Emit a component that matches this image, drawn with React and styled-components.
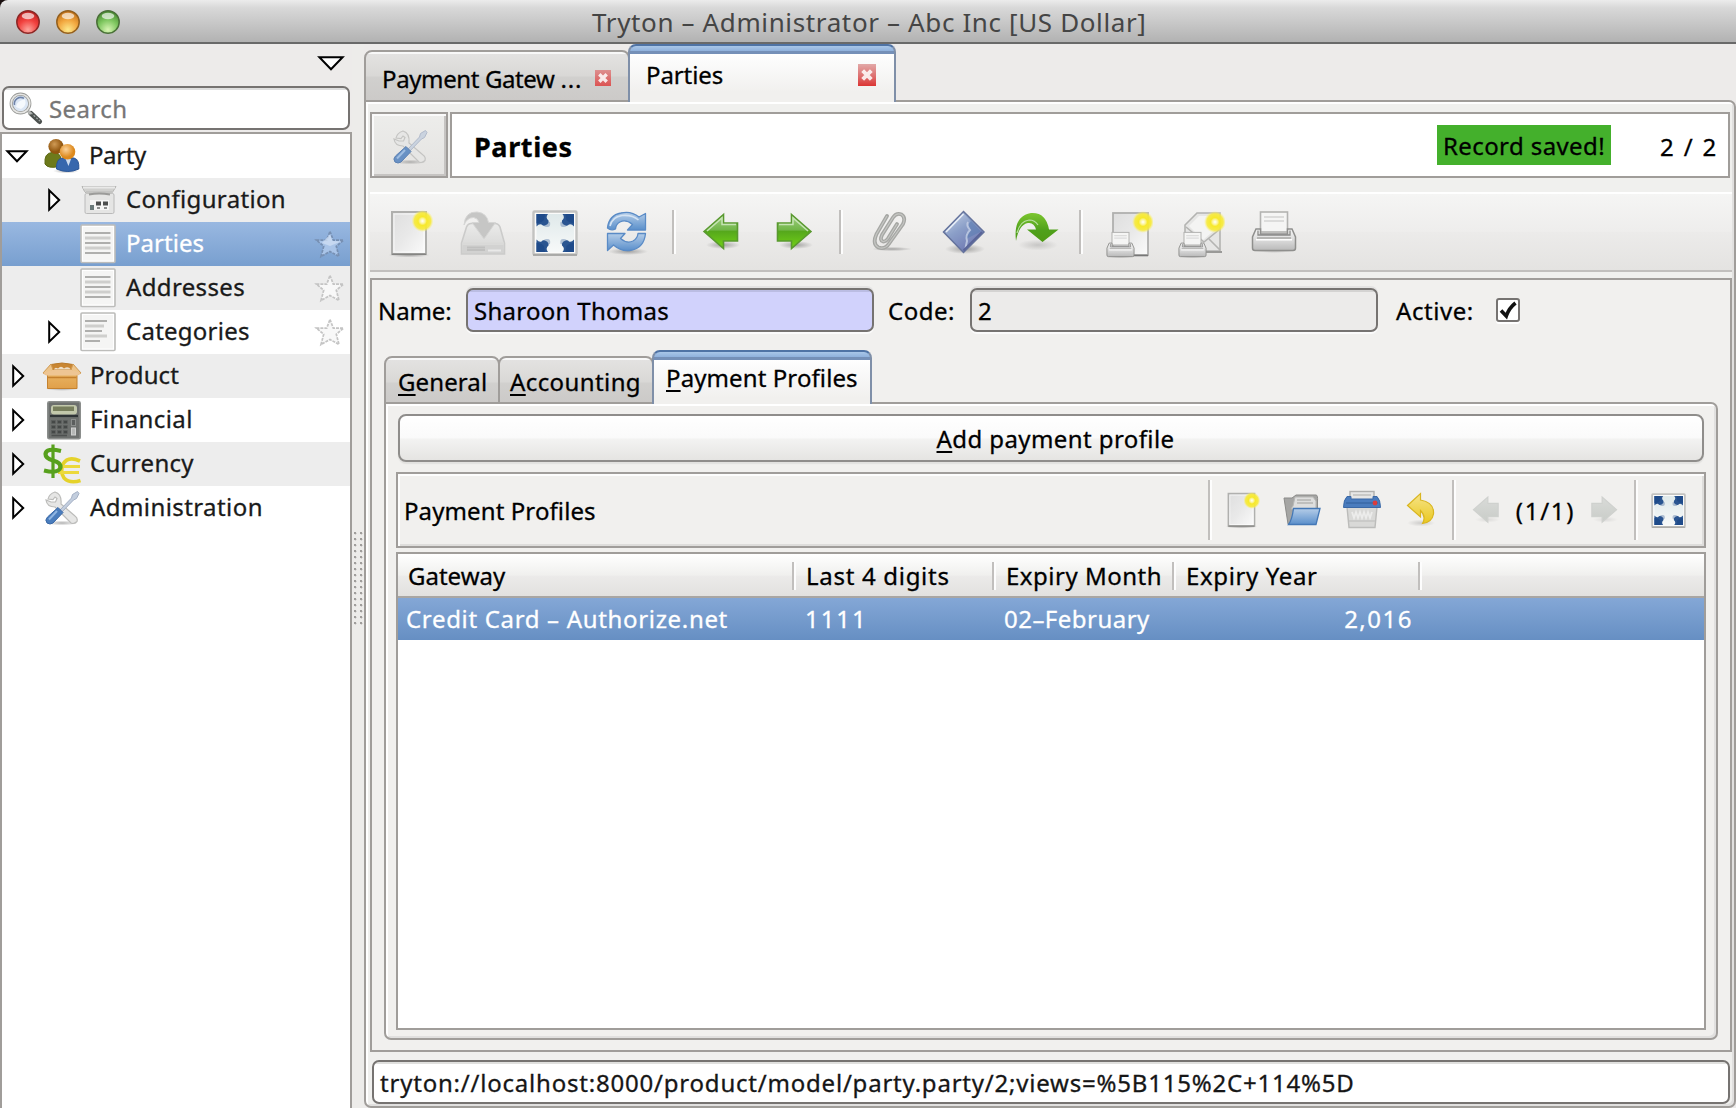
import React from "react";
import styled, { createGlobalStyle, css } from "styled-components";

const line = "#a09d9a";
const lineDark = "#767371";
const face = "#f1f0ee";

const Global = createGlobalStyle`
  *, *::before, *::after { box-sizing: border-box; }
  html, body { margin: 0; height: 100%; overflow: hidden; background: #edebe9; }
  body { font-family: "Noto Sans", "Open Sans", sans-serif; font-size: 24px; line-height: 32px; color: #000; }
  svg { display: block; flex: none; }
`;

const T = styled.span`
  letter-spacing: ${(p) => p.$ls || 0}px;
  white-space: nowrap;
  -webkit-text-stroke: 0.3px currentColor;
`;

const Window = styled.div`
  width: 1736px;
  height: 1108px;
  display: flex;
  flex-direction: column;
  overflow: hidden;
  background: #1a1010;
`;

const TitleBar = styled.header`
  height: 44px;
  flex: none;
  display: grid;
  grid-template-columns: 592px 1fr;
  align-items: center;
  border-radius: 8px 0 0 0;
  background: linear-gradient(#ececec 0, #d8d8d8 8px, #b2b2b2 42px);
  border-bottom: 2px solid #696969;
`;

const Lights = styled.div`
  display: flex;
  gap: 16px;
  padding-left: 16px;
  padding-top: 1px;
`;

const TitleText = styled(T)`
  font-size: 26px;
  color: #454545;
  padding-top: 1px;
  -webkit-text-stroke: 0;
`;

const Body = styled.div`
  flex: 1;
  min-height: 0;
  display: flex;
  background: #edebea;
`;

const Sidebar = styled.aside`
  width: 352px;
  flex: none;
  display: flex;
  flex-direction: column;
`;

const MenuHead = styled.div`
  height: 42px;
  display: flex;
  justify-content: flex-end;
  padding: 12px 7px 0 0;
`;

const SearchBox = styled.div`
  height: 44px;
  margin: 0 2px;
  display: flex;
  align-items: center;
  gap: 6px;
  padding: 1px 6px 0 5px;
  border: 2px solid ${lineDark};
  border-radius: 7px;
  background: linear-gradient(#dedede 2px, #fff 2px);
  color: #767676;
`;

const Tree = styled.div`
  flex: 1;
  margin-top: 2px;
  border: solid ${line};
  border-width: 2px 2px 0;
  background: #fff;
`;

const TreeRow = styled.div`
  height: 44px;
  display: flex;
  align-items: center;
  padding-right: 4px;
  color: ${(p) => (p.$selected ? "#fff" : "#1a1a1a")};
  background: ${(p) => (p.$selected ? "linear-gradient(#99b8e1, #789fcf)" : p.$odd ? "#ededed" : "#fff")};
`;

const Expander = styled.div`
  width: ${(p) => (p.$open ? 29 : 28)}px;
  margin-left: ${(p) => (p.$depth ? 41 : p.$open ? 3 : 5)}px;
  padding-left: ${(p) => (p.$open ? 0 : 5)}px;
  flex: none;
`;

const TreeIcon = styled.div`
  width: 55px;
  padding-left: ${(p) => p.$pad}px;
  flex: none;
`;

const TreeLabel = styled(T)`
  flex: 1;
  padding-bottom: 2px;
`;

const Splitter = styled.div`
  width: 12px;
  flex: none;
  display: flex;
  flex-direction: column;
  padding: 488px 0 0 2px;
  background: #edecea;
`;

const Grip = styled.div`
  width: 10px;
  height: 94px;
  background-image: radial-gradient(circle at 1.2px 1.2px, #9f9d9b 1px, transparent 1.5px);
  background-size: 6px 6px;
`;

const Workspace = styled.main`
  flex: 1;
  min-width: 0;
  display: flex;
  flex-direction: column;
`;

const TabStrip = styled.div`
  display: flex;
  align-items: flex-end;
  height: ${(p) => p.$h}px;
  flex: none;
  margin-bottom: -2px;
`;

const Tab = styled.div`
  width: ${(p) => p.$w}px;
  height: ${(p) => p.$h}px;
  margin-right: ${(p) => p.$mr || 0}px;
  display: flex;
  align-items: flex-start;
  padding: ${(p) => p.$pad};
  position: relative;
  z-index: ${(p) => (p.$active ? 2 : 1)};
  border-radius: 8px 8px 0 0;
  ${(p) =>
    p.$active
      ? css`
          border: 2px solid #8c96a4;
          border-color: #4f73a5 #7f8fa8 transparent #7f8fa8;
          border-bottom: 0;
          background: linear-gradient(#a9c6e8 0, #8fb1dc 5px, #7590b8 5px, #7590b8 8px, #fff 8px, #fbfbfb 16px, ${face} 46px);
        `
      : css`
          border: 2px solid ${line};
          background: linear-gradient(#f8f8f8 2px, #e3e2e1 2px, #d9d8d6 24px, #d1d0ce 25px, #cccac8);
        `}
`;

const Ellipsis = styled(T)`
  padding-left: 6px;
`;

const CloseMark = styled.div`
  width: ${(p) => (p.$big ? 18 : 16)}px;
  height: ${(p) => (p.$big ? 22 : 16)}px;
  margin: ${(p) => p.$m};
  display: grid;
  place-items: center;
  background: ${(p) =>
    p.$big ? "linear-gradient(#e2a9a8, #dd6a6a 60%, #dc3533)" : "linear-gradient(#dd8f8f, #dc5453)"};
`;

const Book = styled.div`
  flex: 1;
  min-height: 0;
  display: flex;
  flex-direction: column;
  border: 2px solid ${line};
  border-radius: 0 7px 7px 7px;
  background: ${(p) => p.$tint || face};
  box-shadow: inset 2px 2px 0 #fff, inset -2px -2px 0 #e1e0df;
  padding: ${(p) => p.$pad};
`;

const HeaderRow = styled.div`
  height: 66px;
  display: flex;
  gap: 2px;
  padding-right: 2px;
  flex: none;
`;

const ToolsButton = styled.div`
  width: 78px;
  border: 2px solid ${line};
  background: linear-gradient(#ededeb, #e4e3e1);
  box-shadow: inset 2px 2px 0 #fafafa, inset -2px -2px 0 #c6c4c2;
  display: grid;
  place-items: center;
  padding: 4px 0 0 2px;
`;

const HeaderPanel = styled.div`
  flex: 1;
  display: flex;
  align-items: center;
  background: #fff;
  border: 2px solid ${line};
  padding: 1px 12px 0 22px;
`;

const Heading = styled(T)`
  font-size: 27px;
  font-weight: 700;
  flex: 1;
  padding-top: 3px;
`;

const Saved = styled.div`
  width: 174px;
  height: 40px;
  margin: -1px 49px 0 0;
  padding: 5px 0 0 6px;
  background: #44b02c;
`;

const Counter = styled(T)`
  width: 56px;
  padding-top: 2px;
`;

const Toolbar = styled.div`
  height: 80px;
  flex: none;
  margin-top: 14px;
  display: flex;
  align-items: flex-start;
  padding: 16px 0 0 5px;
  border-top: 2px solid #fff;
  border-bottom: 2px solid #c1bfbd;
  background: linear-gradient(#f5f5f4, #eeedec 50%, #ecebea 50%, #e4e3e1);
`;

const Tool = styled.div`
  width: ${(p) => p.$w || 72}px;
  height: 44px;
  display: grid;
  place-items: center;
`;

const Sep = styled.i`
  width: 4px;
  height: ${(p) => p.$h || 44}px;
  flex: none;
  margin: ${(p) => p.$m || 0};
  border-left: 2px solid #c1bfbd;
  border-right: 2px solid #fdfdfd;
`;

const Form = styled.section`
  flex: 1;
  min-height: 0;
  margin-top: 6px;
  display: flex;
  flex-direction: column;
  border: 2px solid ${line};
  background: ${face};
`;

const Fields = styled.div`
  height: 52px;
  flex: none;
  display: flex;
  align-items: center;
  padding: 8px 0 0 6px;
`;

const Caption = styled(T)`
  width: ${(p) => p.$w}px;
  flex: none;
  padding-top: 2px;
`;

const Entry = styled.div`
  width: 408px;
  height: 44px;
  flex: none;
  margin-right: ${(p) => p.$mr}px;
  padding: 5px 0 0 6px;
  border: 2px solid ${lineDark};
  border-radius: 7px;
  background: ${(p) =>
    p.$required ? "linear-gradient(#bbbde3 2px, #d1d2fc 2px)" : "linear-gradient(#d4d3d2 2px, #ecebea 2px)"};
  box-shadow: 0 2px 0 #fbfbfb, 0 -2px 0 #e4e3e2;
`;

const Check = styled.div`
  width: 24px;
  height: 24px;
  margin-left: 15px;
  display: grid;
  place-items: center;
  border: 2px solid ${lineDark};
  border-radius: 3px;
  background: #fff;
  box-shadow: 0 2px 0 #fff;
`;

const Pages = styled.div`
  flex: 1;
  min-height: 0;
  display: flex;
  flex-direction: column;
  padding: 18px 12px 10px;
`;

const Key = styled.u`
  text-decoration-thickness: 2px;
  text-underline-offset: 3px;
`;

const WideButton = styled.div`
  height: 48px;
  flex: none;
  margin: 0 0 0 2px;
  padding: 7px 0 0 9px;
  text-align: center;
  border: 2px solid #8f8d8b;
  border-radius: 8px;
  background: linear-gradient(#fff, #fafafa 50%, #f3f3f2 52%, #e5e4e2);
  box-shadow: 0 2px 1px #e2e1df;
`;

const GroupBar = styled.div`
  height: 76px;
  flex: none;
  margin-top: 10px;
  margin-right: -2px;
  display: flex;
  align-items: center;
  padding-left: 6px;
  border: 2px solid ${line};
  box-shadow: inset 2px 2px 0 #fdfdfd, inset -2px -2px 0 #dedddb;
`;

const GroupTitle = styled(T)`
  flex: 1;
  padding-top: 1px;
`;

const Slot = styled.div`
  width: ${(p) => p.$w}px;
  display: grid;
  place-items: center;
  flex: none;
  padding-top: ${(p) => p.$top || 0}px;
`;

const Table = styled.div`
  flex: 1;
  min-height: 0;
  margin-top: 4px;
  margin-right: -2px;
  border: 2px solid ${line};
  background: #fff;
`;

const columns = "398px 200px 180px 246px 1fr";

const HeadRow = styled.div`
  height: 44px;
  display: grid;
  grid-template-columns: ${columns};
  border-bottom: 2px solid #a9a6a3;
  background: linear-gradient(#fff, #f0f0ee 50%, #ebeae9 54%, #e2e1df);
`;

const HeadCell = styled.div`
  display: flex;
  justify-content: space-between;
  padding: 6px 0 0 ${(p) => p.$pl}px;
`;

const HeadSep = styled(Sep)`
  height: 28px;
  margin-top: 2px;
`;

const DataRow = styled.div`
  height: 42px;
  display: grid;
  grid-template-columns: ${columns};
  color: #fff;
  background: linear-gradient(#84a7d6, #668fc3);
`;

const DataCell = styled.div`
  padding: 5px ${(p) => p.$pr || 0}px 0 ${(p) => p.$pl || 0}px;
  text-align: ${(p) => (p.$right ? "right" : "left")};
`;

const UrlBox = styled.div`
  height: 44px;
  flex: none;
  margin: 8px 2px 0;
  padding: 5px 0 0 6px;
  border: 2px solid ${lineDark};
  border-radius: 7px;
  background: linear-gradient(#e0e0de 2px, #fff 2px);
  color: #161616;
`;

/* ---------- shared gradients ---------- */

const Hidden = styled.div`
  height: 0;
  overflow: hidden;
`;

const G = ({ id, stops, x2 = 0, y2 = 1 }) => (
  <linearGradient id={id} x1="0" y1="0" x2={x2} y2={y2}>
    {stops.map(([o, c]) => (
      <stop key={o} offset={o} stopColor={c} />
    ))}
  </linearGradient>
);

const lamps = [
  ["red", "#fca59d", "#f2423f", "#c2201f"],
  ["amber", "#fde98c", "#f2a73f", "#c4741c"],
  ["lime", "#d8f5b4", "#7fc760", "#4a8d33"],
];

const Gradients = () => (
  <Hidden>
    <svg width="1" height="1">
      <defs>
        <G id="paper" x2={1} stops={[[0, "#dedede"], [0.5, "#e9e9e9"], [1, "#fbfbfb"]]} />
        <G id="green" stops={[[0, "#a3cf86"], [0.45, "#71b648"], [0.5, "#56a81c"], [1, "#73d216"]]} />
        <G id="greenFlat" stops={[[0, "#7cc62f"], [0.6, "#4fa01b"], [1, "#4e9a13"]]} />
        <G id="gray" stops={[[0, "#d9dbd8"], [1, "#c9ccc8"]]} />
        <G id="blue" stops={[[0, "#b5cde8"], [1, "#5a8fcb"]]} />
        <G id="diamond" x2={0.6} stops={[[0, "#c9d5e8"], [0.5, "#8b9fc8"], [1, "#6f78b2"]]} />
        <G id="tray" stops={[[0, "#f6f6f6"], [0.5, "#dcdcdc"], [1, "#b9b9b9"]]} />
        <G id="drive" stops={[[0, "#ebebea"], [1, "#d3d3d2"]]} />
        <G id="gold" stops={[[0, "#f7e48a"], [1, "#e9c81f"]]} />
        <G id="box" stops={[[0, "#e9b565"], [1, "#e0a04a"]]} />
        <G id="expand" stops={[[0, "#dfe9ea"], [1, "#f7f9f9"]]} />
        <radialGradient id="spark">
          <stop offset="0" stopColor="#fff" />
          <stop offset="0.25" stopColor="#fbf38e" />
          <stop offset="0.4" stopColor="#f7e92b" />
          <stop offset="0.75" stopColor="#f7ea3a" stopOpacity="0.9" />
          <stop offset="1" stopColor="#fbf17a" stopOpacity="0" />
        </radialGradient>
        <radialGradient id="shade">
          <stop offset="0" stopColor="#000" stopOpacity="0.3" />
          <stop offset="1" stopColor="#000" stopOpacity="0" />
        </radialGradient>
        <radialGradient id="skin" cx="0.4" cy="0.35">
          <stop offset="0" stopColor="#fbd29a" />
          <stop offset="1" stopColor="#dd8a1e" />
        </radialGradient>
        <radialGradient id="skinDark" cx="0.4" cy="0.35">
          <stop offset="0" stopColor="#cf9a55" />
          <stop offset="1" stopColor="#91560f" />
        </radialGradient>
        {lamps.map(([id, a, b, c]) => (
          <radialGradient key={id} id={id} cx="0.5" cy="0.85" r="0.8">
            <stop offset="0" stopColor={a} />
            <stop offset="0.55" stopColor={b} />
            <stop offset="1" stopColor={c} />
          </radialGradient>
        ))}
      </defs>
    </svg>
  </Hidden>
);

/* ---------- icons ---------- */

const Light = ({ tone, edge }) => (
  <svg width="24" height="24" viewBox="0 0 24 24">
    <circle cx="12" cy="12.6" r="11.4" fill="#f3f3f3" opacity="0.7" />
    <circle cx="12" cy="12" r="11.2" fill={`url(#${tone})`} stroke={edge} strokeWidth="1.5" />
    <ellipse cx="12" cy="6" rx="6.3" ry="3.2" fill="#fff" opacity="0.65" />
  </svg>
);

const Down = ({ w, h }) => (
  <svg width={w} height={h} viewBox={`0 0 ${w} ${h}`}>
    <path d={`M2.4 1.2H${w - 2.4}L${w / 2} ${h - 1.8}Z`} fill="#fff" stroke="#000" strokeWidth="2" />
  </svg>
);

const Right = () => (
  <svg width="13" height="24" viewBox="0 0 13 24">
    <path d="M1.2 2.4V21.6L11.2 12Z" fill="#fff" stroke="#000" strokeWidth="2" />
  </svg>
);

const Magnifier = () => (
  <svg width="34" height="34" viewBox="0 0 34 34">
    <path d="M22 21.500L30.500 29.500" stroke="#4c514f" strokeWidth="5" strokeLinecap="round" />
    <path d="M22 21L31 29" stroke="#9ba19e" strokeWidth="1.400" strokeDasharray="2 1.500" />
    <path d="M18 18L22 22" stroke="#b4b6b4" strokeWidth="3" />
    <circle cx="11.500" cy="11.500" r="9.300" fill="#dbe6f4" stroke="#9a9b98" strokeWidth="3.200" />
    <circle cx="11.500" cy="11.500" r="9.300" fill="none" stroke="#e6e6e4" strokeWidth="1.600" />
    <path d="M5.500 13A6.300 6.300 0 0 1 15 6.400" fill="none" stroke="#6f83a8" strokeWidth="1.600" />
    <path d="M7 15Q8 8 16 7.500Q18 14 12 17Z" fill="#f5f9fd" />
  </svg>
);

const People = () => (
  <svg width="36" height="36" viewBox="0 0 36 36">
    <ellipse cx="22" cy="33" rx="13" ry="2.500" fill="url(#shade)" />
    <path d="M1 26Q0 15 8 14.500Q17 14 17 22L15 28.500Q4 31 1 26Z" fill="#6d7a1b" stroke="#59660f" />
    <circle cx="12" cy="8.500" r="7.600" fill="url(#skinDark)" />
    <path d="M12.500 31Q12 21 18 20H30Q35.500 21.500 34.800 31Q24 36 12.500 31Z" fill="#3767ad" stroke="#2a5596" />
    <path d="M21.500 21H27L24.500 28Z" fill="#cfdcee" />
    <circle cx="23.500" cy="13.800" r="7.800" fill="url(#skin)" />
  </svg>
);

const Cabinet = () => (
  <svg width="36" height="30" viewBox="0 0 36 30">
    <path d="M1 1.500H35L32 6.500L29 10H7L3.500 6.500Z" fill="#d0d0ce" stroke="#b6b6b4" />
    <path d="M2 2.500H34" stroke="#e9e9e8" strokeWidth="2" />
    <rect x="4" y="8.500" width="29" height="20" rx="1.500" fill="#e5e5e4" stroke="#bababa" />
    <path d="M5 7.500H31" stroke="#c4c4c2" strokeWidth="3" />
    <path d="M8 9.500Q18 7.500 29 9.500" stroke="#9b9b99" strokeWidth="2" fill="none" />
    <rect x="9" y="15" width="19" height="10" fill="#f6f6f5" />
    <path d="M15 16.500h5v4h-5zM22 16.500h5v4h-5z" fill="#4d4f4e" />
    <path d="M9 20h4v5h-4z" fill="#6b7a7a" />
    <path d="M16 22h3v2h-3zM23 22h3v2h-3z" fill="#8d8f8e" />
  </svg>
);

const Sheet = ({ ragged }) => (
  <svg width="36" height="40" viewBox="0 0 36 40">
    <rect x="1" y="1" width="34" height="37.500" rx="1" fill="#f5f5f4" stroke="#bdbdbb" strokeWidth="1.600" />
    <rect x="2.500" y="2.500" width="31" height="34.500" fill="none" stroke="#fff" />
    {[8, 13, 18, 23, 28].map((y, i) => (
      <path
        key={y}
        d={`M5 ${y + 1}H${ragged ? [27, 24, 22, 27, 20][i] : 30.5}`}
        stroke={i % 2 ? "#cfcfcd" : "#a7a7a5"}
        strokeWidth={i % 2 ? 3 : 1.8}
      />
    ))}
  </svg>
);

const Carton = () => (
  <svg width="40" height="29" viewBox="0 0 40 29">
    <ellipse cx="20" cy="26.500" rx="17" ry="2.500" fill="url(#shade)" />
    <path d="M9 2.500Q20 -0.500 31 2.500L36 10H4Z" fill="#c98632" stroke="#b87a2c" />
    <path d="M12 7.500Q13 4.500 16 6.500Q19 3 22 6.500Q26 3.500 29 7.500Z" fill="#eedfc8" />
    <path d="M5.500 10H35V26.500H5.500Z" fill="url(#box)" stroke="#c5822f" />
    <path d="M9 2L1 11L4 12.500L11 8ZM31 2L39 11L36 12.500L29 8Z" fill="#edc48a" stroke="#d09a52" />
    <path d="M6 15.500H34.500" stroke="#c4802e" strokeWidth="1.500" />
    <path d="M1.500 11L10 8H30L38.500 11L36 13.500H4Z" fill="#eec593" />
  </svg>
);

const Calculator = () => (
  <svg width="34" height="39" viewBox="0 0 34 39">
    <rect x="0.800" y="0.800" width="32.400" height="37" rx="1.500" fill="#6d706e" stroke="#8b8e8c" strokeWidth="1.600" />
    <rect x="4" y="4" width="26" height="9.500" rx="3" fill="#c2c8ab" />
    <rect x="6" y="5.500" width="21" height="4.500" fill="#777e5c" />
    <path d="M3 15H31" stroke="#2f3436" strokeWidth="2.200" />
    {[19.5, 24.5, 29.5].map((y) =>
      [4.5, 10.5, 16.5].map((x) => (
        <rect key={x + "-" + y} x={x} y={y} width="3.800" height="3" fill="#454847" stroke="#5c5f5e" strokeWidth="0.600" />
      ))
    )}
    <path d="M4.500 34.500H20" stroke="#4d504f" strokeWidth="1.600" />
    <rect x="24.500" y="18.500" width="4" height="6" fill="#5b5e5d" stroke="#8c8f8d" />
    <rect x="24.500" y="27" width="4" height="7" fill="#b5b7b5" stroke="#cfd0cf" />
  </svg>
);

const Money = () => (
  <svg width="40" height="40" viewBox="0 0 40 40">
    <path d="M38 17Q26 11.500 21 20Q18 28 22 34Q28 40 38.500 36.500" fill="none" stroke="#e5d22a" strokeWidth="3.600" />
    <path d="M16 22.500H38M16 28.500H37" stroke="#ecd93b" strokeWidth="3.200" />
    <path d="M19 7Q4 3.500 3.500 10Q3.500 14.500 11 16.500Q19 18.500 18.500 23.500Q16.500 30 2 26.500" fill="none" stroke="#57a01d" strokeWidth="4.200" />
    <path d="M11 0.500V34" stroke="#57a01d" strokeWidth="3.200" />
  </svg>
);

const Wrench = ({ size = 36, fade = 1 }) => (
  <svg width={size} height={size} viewBox="0 0 36 36" opacity={fade}>
    <ellipse cx="18" cy="33" rx="16" ry="2.500" fill="url(#shade)" />
    <path
      d="M11 2Q5 4 4 9L9 9.500L11 7L13 8.500L11.500 12L7 12L2 10Q3 17 11 17L27 33Q30 34.500 33 31.500Q34 28 31 26L17 14Q18 4 11 2Z"
      fill="#e6e6e5"
      stroke="#bcbcba"
      strokeWidth="1.200"
    />
    <path d="M33.500 1.500L28.500 4.500L27.500 8L15.500 20.500L17.500 22.500L29.500 10L32.500 8.500L35 3.500Z" fill="#c3cede" stroke="#a3afc4" />
    <path d="M14 17.500L19 22.500L9 33Q6 35 3 33Q0.500 30 3.500 27Z" fill="#4a7dbd" stroke="#3a68a6" />
    <path d="M13 21L5 29.500" stroke="#8fb5e2" strokeWidth="2" />
  </svg>
);

const Star = ({ lit }) => (
  <svg width="32" height="30" viewBox="0 0 32 30">
    <path
      d="M16 2.500L19.300 11.200H29.500L22.300 17.200L25 27.500L16 22.500L7 27.500L9.700 17.200L2.500 11.200H12.700Z"
      fill={lit ? "#a9c4e8" : "#f8f8f8"}
      stroke={lit ? "#7790b3" : "#c4c4c4"}
      strokeWidth="1.700"
      strokeDasharray="3 1"
    />
    {lit && <path d="M16 5.500L18.500 12L27 12.500L16 17L8 14Z" fill="#cdddf2" opacity="0.8" />}
  </svg>
);

const Cross = ({ s }) => (
  <svg width={s} height={s} viewBox="0 0 12 12">
    <path d="M2.300 2.300L9.700 9.700M9.700 2.300L2.300 9.700" stroke="#fff" strokeWidth="3.400" opacity="0.85" />
  </svg>
);

const NewDoc = ({ w = 44, h = 48 }) => (
  <svg width={w} height={h} viewBox="0 0 44 48">
    <ellipse cx="20" cy="45" rx="21" ry="2.500" fill="url(#shade)" />
    <rect x="3" y="2" width="34" height="42" fill="url(#paper)" stroke="#b0b0ae" strokeWidth="2" />
    <path d="M3 44.300H37" stroke="#858583" strokeWidth="1.600" />
    <rect x="5" y="4" width="30" height="38" fill="none" stroke="#fff" opacity="0.7" />
    <circle cx="33.500" cy="11" r="11" fill="url(#spark)" />
  </svg>
);

const SaveIcon = () => (
  <svg width="46" height="46" viewBox="0 0 46 46">
    <path d="M6.500 17Q8 13.500 11 13.500H35Q38.500 13.500 40 17L44.500 33V44H1.500V33Z" fill="url(#drive)" stroke="#cbcbca" strokeWidth="1.600" />
    <path d="M2 33.500H44" stroke="#d9d9d8" strokeWidth="2" />
    <path d="M3 35H43V43H3Z" fill="#d2d2d1" />
    <path d="M7 37.500H25M7 40H25" stroke="#c0c0bf" strokeWidth="1.800" />
    <path d="M28 40.500H41" stroke="#e9e9e8" strokeWidth="2" />
    <path d="M4 15Q5 1.500 17 2Q27 3 28.500 12.500H35.500L24 29L12 12.500H19Q18 8 13.500 7.500Q7 7.500 4 15Z" fill="#c6c6c5" stroke="#d6d6d5" />
  </svg>
);

const corners = ["", "translate(46.500 0) scale(-1 1)", "translate(0 46) scale(1 -1)", "translate(46.500 46) scale(-1 -1)"];

const Expand = ({ s = 46 }) => (
  <svg width={s} height={s} viewBox="0 0 46 46">
    <rect x="1.500" y="1.500" width="43" height="43" rx="1" fill="#fbfbfa" stroke="#c3c3c1" strokeWidth="2.400" />
    <path d="M1 45H45" stroke="#a0a09e" strokeWidth="1.600" />
    <rect x="4.500" y="4" width="37.500" height="38" fill="url(#expand)" />
    {corners.map((t) => (
      <g key={t} transform={t}>
        <path d="M13 11L18 12Q19 17 15.500 17Q11 17.500 11 13Z" fill="#7893b8" opacity="0.55" />
        <path d="M4.500 4H16Q13 7.500 16.500 10.500Q17 13.500 14 15Q11 16.500 9.500 14.500Q7 13.500 4.500 16.500Z" fill="#2a5591" />
        <path d="M4.500 4H13L12 10L9.500 12L4.500 13.500Z" fill="#1f4b8a" />
      </g>
    ))}
  </svg>
);

const Refresh = () => (
  <svg width="44" height="46" viewBox="0 0 44 46">
    <ellipse cx="23" cy="41.500" rx="20" ry="3.500" fill="url(#shade)" />
    <g stroke="#5a8bc6" strokeWidth="1.300" fill="url(#blue)" strokeLinejoin="round">
      <path d="M2.500 18Q4 5 16 3Q26 0.500 34 7L40.500 3.500V20H22.500L27.500 14.500Q21 9 15 12Q11 14 10.500 19Q6 21 2.500 18Z" />
      <path d="M40.500 23.500Q39 37.500 27 40Q17 42.500 8.500 35L2.500 40.500V23.500H20L15.500 28.500Q22 34 28 31Q32.500 28.500 33 23.500Z" />
    </g>
    <path d="M5 16Q7 7 17 5.500Q27 4.500 33.500 10" stroke="#d4e3f3" strokeWidth="1.600" fill="none" />
  </svg>
);

const Arrow = ({ right, off, w = 38, h = 40 }) => (
  <svg width={w} height={h} viewBox="0 0 38 40">
    <ellipse cx="21" cy="33" rx="17" ry="4" fill="url(#shade)" opacity={off ? 0.3 : 1} />
    <g transform={right ? "translate(38 0) scale(-1 1)" : ""}>
      <path
        d="M2 19.500L21.500 2.500V11H35.500V29H21.500V36.500Z"
        fill={off ? "url(#gray)" : "url(#green)"}
        stroke={off ? "#cfd1ce" : "#59992f"}
        strokeWidth="1.600"
      />
      {!off && <path d="M5 19L20 6V12.500H34" fill="none" stroke="#c5e3b3" strokeWidth="1.500" />}
    </g>
  </svg>
);

const clipPathData =
  "M15 5L4.500 23Q0 33 6.500 36.500Q13 39 17.500 32L31 13Q34 6.500 29.500 3.500Q24.500 1.500 21 6.500L10 24Q7.500 29.500 11 30.500Q13.500 31 16 27.500L25 13";

const Clip = () => (
  <svg width="40" height="42" viewBox="0 0 40 42">
    <ellipse cx="20" cy="38" rx="20" ry="2.200" fill="url(#shade)" />
    <path d={clipPathData} fill="none" stroke="#a6a7a4" strokeWidth="3.800" strokeLinecap="round" />
    <path d={clipPathData} fill="none" stroke="#c5c6c3" strokeWidth="1.200" />
  </svg>
);

const Diamond = () => (
  <svg width="44" height="46" viewBox="0 0 44 46">
    <ellipse cx="23" cy="39" rx="20" ry="5" fill="url(#shade)" />
    <path d="M21.500 1.500L42 22L21.500 42.500L1.500 22Z" fill="url(#diamond)" stroke="#65739c" strokeWidth="1.500" />
    <path d="M21.500 3L29 11Q24 16 27 20Q22 24 24 29L28 27L39 21.500L23 4Z" fill="#5b7db2" opacity="0.6" />
    <path d="M26 12Q24 15 28 20Q23 25 25 31L23.500 38" stroke="#c3cee4" strokeWidth="2" fill="none" opacity="0.85" />
    <path d="M4 22L21.500 4" stroke="#e9eff7" strokeWidth="1.600" />
    <path d="M40 22L21.500 40.500" stroke="#5a6498" strokeWidth="2" />
  </svg>
);

const Jump = () => (
  <svg width="46" height="42" viewBox="0 0 46 42">
    <ellipse cx="24" cy="34" rx="20" ry="5.500" fill="url(#shade)" opacity="0.5" />
    <path d="M2 30Q-1 5 17 2Q32 1 35 18.500H44.500L28.500 31L13 18.500H22Q20 11 14 12Q5 13.500 2 30Z" fill="url(#greenFlat)" />
    <path d="M3 22Q6 10 15 9Q21 9 24 14" stroke="#b9dfa0" strokeWidth="1.200" fill="none" />
  </svg>
);

const PrinterShape = () => (
  <g>
    <ellipse cx="23" cy="40" rx="22" ry="3" fill="url(#shade)" />
    <rect x="9.500" y="2" width="27" height="20" fill="#f5f5f4" stroke="#b3b3b1" strokeWidth="1.600" />
    <path d="M13 7H33M13 11H33" stroke="#dcdcdb" strokeWidth="2" />
    <path
      d="M5 19H9.500V24H36.500V19H41L44.500 27V38Q44.500 40.500 42 40.500H4Q1.500 40.500 1.500 38V27Z"
      fill="url(#tray)"
      stroke="#8f8f8d"
      strokeWidth="1.500"
    />
    <path d="M6 28H40" stroke="#a8a8a6" strokeWidth="1.500" />
    <path d="M5 29.800H41" stroke="#fff" strokeWidth="1.600" />
    <path d="M7 20.500V25H39V20.500" stroke="#8b8b89" strokeWidth="1.300" fill="none" />
  </g>
);

const Printer = () => (
  <svg width="46" height="44" viewBox="0 0 46 44">
    <PrinterShape />
  </svg>
);

const Report = () => (
  <svg width="48" height="50" viewBox="0 0 48 50">
    <rect x="8" y="3" width="35" height="42" fill="url(#paper)" stroke="#b0b0ae" strokeWidth="1.800" />
    <path d="M28 45.500H43" stroke="#777" strokeWidth="1.600" />
    <svg x="1" y="21" width="29" height="28" viewBox="0 0 46 44">
      <PrinterShape />
    </svg>
    <circle cx="38" cy="12" r="11" fill="url(#spark)" />
  </svg>
);

const Mail = () => (
  <svg width="48" height="50" viewBox="0 0 48 50">
    <path d="M8 15L20 3H43V41H8Z" fill="#e6e6e5" stroke="#b3b3b1" strokeWidth="1.600" />
    <path d="M12 16L22 6H35L40 18L26 30Z" fill="#f4f4f3" />
    <path d="M9 17L27 32L43 19M32 29L43 40" stroke="#b4b4b2" strokeWidth="1.600" fill="none" />
    <path d="M28 42H45" stroke="#9a9a98" strokeWidth="2" />
    <svg x="1" y="21" width="29" height="28" viewBox="0 0 46 44">
      <PrinterShape />
    </svg>
    <circle cx="38" cy="12" r="11" fill="url(#spark)" />
  </svg>
);

const Folder = () => (
  <svg width="38" height="34" viewBox="0 0 38 34">
    <path d="M1 5H9L13 2H33Q35 2 34.500 8V16L8 31H5Z" fill="#a5a5a3" stroke="#8b8b89" />
    <path d="M10 13L12 4H30L33 8V16H8Z" fill="#dededd" stroke="#b7b7b5" />
    <path d="M14 7H28M14 10H30" stroke="#b5b5b3" strokeWidth="1.500" />
    <path d="M10.500 15.500H37L33 31.500H5.500Q9 27 10.500 15.500Z" fill="url(#blue)" stroke="#4478b6" strokeWidth="1.300" />
  </svg>
);

const Shredder = () => (
  <svg width="38" height="40" viewBox="0 0 38 40">
    <rect x="7" y="1.500" width="24" height="12" fill="#e6e6e5" stroke="#b0b0ae" strokeWidth="1.400" />
    <path d="M10 5H28" stroke="#c9c9c7" strokeWidth="2" />
    <path d="M4 17H34L32 37.500H6Z" fill="#d9d9d7" stroke="#bcbcba" strokeWidth="1.400" />
    <path d="M9 22L11 28L13 22L15 28L17 22L19 28L21 22L23 28L25 22L27 28L29 22" stroke="#ececeb" strokeWidth="1.800" fill="none" />
    <path d="M6 31H32" stroke="#c5c5c3" strokeWidth="1.500" />
    <path d="M4 6.500H8V9H30V6.500H34Q37.500 10 37.500 17.500H0.500Q0.500 10 4 6.500Z" fill="#4a7cbe" stroke="#3a68a6" />
    <path d="M3 13H35" stroke="#3a68a6" strokeWidth="1.500" />
    <circle cx="32" cy="13" r="2.400" fill="#dc3b3b" />
  </svg>
);

const Undo = () => (
  <svg width="30" height="36" viewBox="0 0 30 36">
    <ellipse cx="15" cy="31" rx="14" ry="3.500" fill="url(#shade)" opacity="0.5" />
    <path d="M1.500 13.500L14.500 1.500V8Q28.500 10.500 27.500 22Q26 30.500 16.500 31.500Q20.500 24.500 14.500 18.500V25Z" fill="url(#gold)" stroke="#d9b520" strokeWidth="1.200" />
  </svg>
);

const Tick = () => (
  <svg width="20" height="20" viewBox="0 0 20 20">
    <path d="M3 10.500L8.300 16Q11 8 17.500 3" fill="none" stroke="#111" strokeWidth="3.600" />
  </svg>
);

/* ---------- content ---------- */

const tree = [
  { label: "Party", ls: -0.4, icon: <People />, pad: 10, open: true },
  { label: "Configuration", ls: 0.33, icon: <Cabinet />, pad: 10, depth: 1, twisty: true },
  { label: "Parties", ls: 0.05, icon: <Sheet />, pad: 9, depth: 1, selected: true, star: true },
  { label: "Addresses", ls: 0.35, icon: <Sheet />, pad: 9, depth: 1, star: true },
  { label: "Categories", ls: 0.25, icon: <Sheet ragged />, pad: 9, depth: 1, twisty: true, star: true },
  { label: "Product", ls: 0.1, icon: <Carton />, pad: 7, twisty: true },
  { label: "Financial", ls: 0.4, icon: <Calculator />, pad: 12, twisty: true },
  { label: "Currency", ls: 0.3, icon: <Money />, pad: 7, twisty: true },
  { label: "Administration", ls: 0.42, icon: <Wrench />, pad: 9, twisty: true },
];

export default function App() {
  return (
    <Window>
      <Global />
      <Gradients />
      <TitleBar>
        <Lights>
          <Light tone="red" edge="#8c2826" />
          <Light tone="amber" edge="#94601f" />
          <Light tone="lime" edge="#4a7038" />
        </Lights>
        <TitleText $ls={0.63}>Tryton – Administrator – Abc Inc [US Dollar]</TitleText>
      </TitleBar>
      <Body>
        <Sidebar>
          <MenuHead>
            <Down w={28} h={15} />
          </MenuHead>
          <SearchBox>
            <Magnifier />
            <T $ls={0.4}>Search</T>
          </SearchBox>
          <Tree>
            {tree.map((n, i) => (
              <TreeRow key={n.label} $selected={n.selected} $odd={i % 2 === 1}>
                <Expander $depth={n.depth} $open={n.open}>
                  {n.open ? <Down w={24} h={13} /> : n.twisty ? <Right /> : null}
                </Expander>
                <TreeIcon $pad={n.pad}>{n.icon}</TreeIcon>
                <TreeLabel $ls={n.ls}>{n.label}</TreeLabel>
                {n.star && <Star lit={n.selected} />}
              </TreeRow>
            ))}
          </Tree>
        </Sidebar>
        <Splitter>
          <Grip />
        </Splitter>
        <Workspace>
          <TabStrip $h={58}>
            <Tab $w={266} $h={52} $mr={-2} $pad="11px 0 0 16px">
              <T $ls={-0.38}>Payment Gatew</T>
              <Ellipsis $ls={0.8}>...</Ellipsis>
              <CloseMark $m="7px 0 0 13px">
                <Cross s={12} />
              </CloseMark>
            </Tab>
            <Tab $w={268} $h={58} $active $pad="13px 0 0 16px">
              <T $ls={-0.1}>Parties</T>
              <CloseMark $big $m="5px 0 0 135px">
                <Cross s={14} />
              </CloseMark>
            </Tab>
          </TabStrip>
          <Book $tint="#f0f0ee" $pad="10px 2px 2px 4px">
            <HeaderRow>
              <ToolsButton>
                <Wrench size={36} fade={0.8} />
              </ToolsButton>
              <HeaderPanel>
                <Heading $ls={0.6}>Parties</Heading>
                <Saved>
                  <T $ls={0.4}>Record saved!</T>
                </Saved>
                <Counter $ls={1.84}>2 / 2</Counter>
              </HeaderPanel>
            </HeaderRow>
            <Toolbar>
              <Tool><NewDoc /></Tool>
              <Tool><SaveIcon /></Tool>
              <Tool><Expand /></Tool>
              <Tool><Refresh /></Tool>
              <Sep $m="0 9px 0 9px" />
              <Tool><Arrow /></Tool>
              <Tool $w={74}><Arrow right /></Tool>
              <Sep $m="0 13px 0 8px" />
              <Tool><Clip /></Tool>
              <Tool><Diamond /></Tool>
              <Tool $w={74}><Jump /></Tool>
              <Sep $m="0 10px 0 5px" />
              <Tool><Report /></Tool>
              <Tool><Mail /></Tool>
              <Tool $w={74}><Printer /></Tool>
            </Toolbar>
            <Form>
              <Fields>
                <Caption $w={88} $ls={-0.1}>Name:</Caption>
                <Entry $required $mr={14}>
                  <T $ls={0.28}>Sharoon Thomas</T>
                </Entry>
                <Caption $w={82} $ls={0.5}>Code:</Caption>
                <Entry $mr={18}>
                  <T>2</T>
                </Entry>
                <Caption $w={85} $ls={0.55}>Active:</Caption>
                <Check>
                  <Tick />
                </Check>
              </Fields>
              <Pages>
                <TabStrip $h={54}>
                  <Tab $w={116} $h={48} $mr={-2} $pad="8px 0 0 12px">
                    <T $ls={0.1}><Key>G</Key>eneral</T>
                  </Tab>
                  <Tab $w={156} $h={48} $mr={-2} $pad="8px 0 0 10px">
                    <T $ls={0.4}><Key>A</Key>ccounting</T>
                  </Tab>
                  <Tab $w={220} $h={54} $active $pad="10px 0 0 12px">
                    <T $ls={0.1}><Key>P</Key>ayment Profiles</T>
                  </Tab>
                </TabStrip>
                <Book $pad="10px 12px 8px 10px">
                  <WideButton>
                    <T $ls={0.41}><Key>A</Key>dd payment profile</T>
                  </WideButton>
                  <GroupBar>
                    <GroupTitle $ls={0.1}>Payment Profiles</GroupTitle>
                    <Sep $h={60} $m="0 2px 0 0" />
                    <Slot $w={58}><NewDoc w={34} h={37} /></Slot>
                    <Slot $w={60}><Folder /></Slot>
                    <Slot $w={60}><Shredder /></Slot>
                    <Slot $w={58}><Undo /></Slot>
                    <Sep $h={60} $m="0 8px 0 2px" />
                    <Slot $w={44}><Arrow off w={28} h={30} /></Slot>
                    <Slot $w={75} $top={1}><T $ls={1.7}>(1/1)</T></Slot>
                    <Slot $w={42}><Arrow off right w={28} h={30} /></Slot>
                    <Sep $h={60} $m="0 0 0 9px" />
                    <Slot $w={60}><Expand s={35} /></Slot>
                    <Slot $w={6} />
                  </GroupBar>
                  <Table>
                    <HeadRow>
                      <HeadCell $pl={10}><T>Gateway</T><HeadSep /></HeadCell>
                      <HeadCell $pl={10}><T $ls={0.7}>Last 4 digits</T><HeadSep /></HeadCell>
                      <HeadCell $pl={10}><T $ls={0.5}>Expiry Month</T><HeadSep /></HeadCell>
                      <HeadCell $pl={10}><T $ls={0.62}>Expiry Year</T><HeadSep /></HeadCell>
                      <HeadCell />
                    </HeadRow>
                    <DataRow>
                      <DataCell $pl={8}><T $ls={0.67}>Credit Card – Authorize.net</T></DataCell>
                      <DataCell $pl={9}><T $ls={1.9}>1111</T></DataCell>
                      <DataCell $pl={8}><T $ls={0.47}>02–February</T></DataCell>
                      <DataCell $right $pr={9}><T $ls={1.5}>2,016</T></DataCell>
                      <DataCell />
                    </DataRow>
                  </Table>
                </Book>
              </Pages>
            </Form>
            <UrlBox>
              <T $ls={0.79}>tryton://localhost:8000/product/model/party.party/2;views=%5B115%2C+114%5D</T>
            </UrlBox>
          </Book>
        </Workspace>
      </Body>
    </Window>
  );
}
